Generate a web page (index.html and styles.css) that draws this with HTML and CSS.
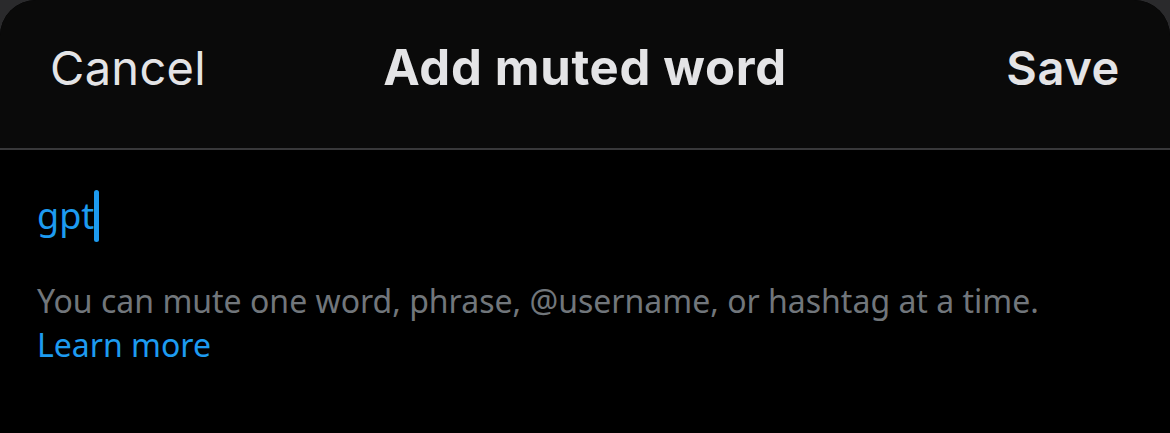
FILE: index.html
```html
<!DOCTYPE html>
<html lang="en">
<head>
  <meta charset="UTF-8" />
  <title>Add muted word</title>
  <link rel="stylesheet" href="styles.css">
</head>
<body>
  <div class="sheet">
    <header class="sheet-header">
      <span class="cancel">Cancel</span>
      <h1>Add muted word</h1>
      <span class="save">Save</span>
    </header>

    <div class="sheet-body">
      <div class="word-input"><span class="word">gpt</span><span class="caret"></span></div>
      <p class="hint">You can mute one word, phrase, @username, or hashtag at a time.<br><a href="#">Learn more</a></p>
    </div>
  </div>
</body>
</html>
```

FILE: styles.css
```css
html, body { margin: 0; height: 100%; }
body { background-color: #2a2a2c; font-family: Inter, "Liberation Sans", sans-serif; overflow: hidden; }
.sheet { height: 100%; background-color: #000; border-radius: 36px 36px 0 0; overflow: hidden; }
.sheet-header { display: grid; grid-template-columns: 1fr auto 1fr; align-items: center; height: 150px; padding: 0 50px 14px; box-sizing: border-box; background-color: #0a0a0a; border-bottom: 2px solid #38383a; color: #e4e4e6; font-size: 47px; }
.sheet-header h1 { margin: 0; font-size: 49px; font-weight: 700; letter-spacing: 0.7px; }
.cancel { font-weight: 400; letter-spacing: 0.3px; }
.save { justify-self: end; font-weight: 600; letter-spacing: 0.6px; }
.sheet-body { padding: 38px 37px; }
.word-input { display: flex; align-items: center; height: 56px; }
.word { color: #1d9bf0; font-size: 36px; font-family: "Noto Sans", sans-serif; line-height: 1; }
.caret { width: 5px; height: 52px; border-radius: 3px; background-color: #1d9bf0; }
.hint { margin: 35px 0 0; color: #71767b; font-family: "Noto Sans", sans-serif; font-size: 32px; line-height: 44px; }
.hint a { color: #1d9bf0; text-decoration: none; }
```
